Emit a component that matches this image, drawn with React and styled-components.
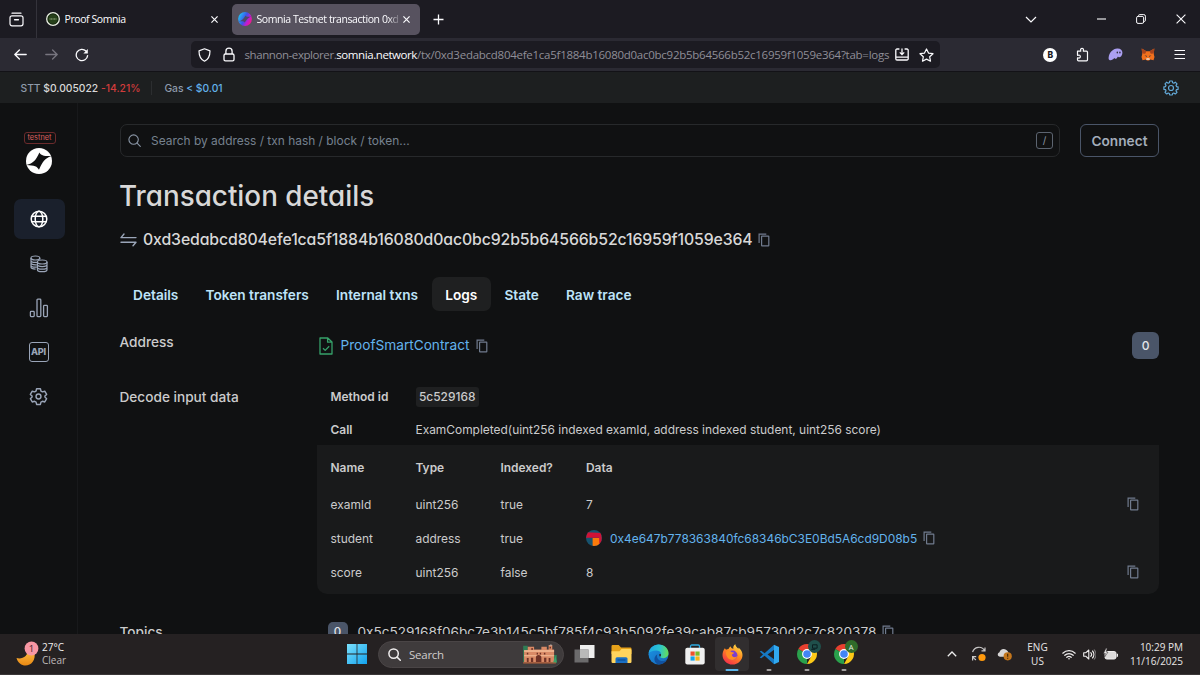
import React from "react";
import styled, { createGlobalStyle, css } from "styled-components";

const tabs = ["Details", "Token transfers", "Internal txns", "Logs", "State", "Raw trace"];

const params = [
  { name: "examId", type: "uint256", indexed: "true", value: "7" },
  {
    name: "student",
    type: "address",
    indexed: "true",
    address: "0x4e647b778363840fc68346bC3E0Bd5A6cd9D08b5",
  },
  { name: "score", type: "uint256", indexed: "false", value: "8" },
];

const App = () => {
  return (
    <Screen>
      <GlobalStyle />
      <TabStrip>
        <PinnedCell>
          <RecentIcon />
        </PinnedCell>
        <BrowserTab $width={185}>
          <ProofFavicon />
          <TabTitle>Proof Somnia</TabTitle>
          <CloseIcon size={7} />
        </BrowserTab>
        <BrowserTab $width={188} $active>
          <SomniaFavicon />
          <TabTitle $fade>Somnia Testnet transaction 0xd3</TabTitle>
          <CloseIcon size={7} />
        </BrowserTab>
        <NewTab>
          <svg width="11" height="11" viewBox="0 0 11 11" stroke="#fbfbfe" strokeWidth="1.3">
            <path d="M5.5 0.5v10M0.5 5.5h10" />
          </svg>
        </NewTab>
        <WindowButtons>
          <WindowButton $width={70}>
            <svg width="12" height="7" viewBox="0 0 12 7" fill="none" stroke="#fbfbfe" strokeWidth="1.2">
              <path d="M1 1l5 5 5-5" />
            </svg>
          </WindowButton>
          <WindowButton $width={70}>
            <svg width="9" height="2" viewBox="0 0 9 2">
              <path d="M0 1h9" stroke="#fbfbfe" strokeWidth="1.1" />
            </svg>
          </WindowButton>
          <WindowButton $width={10}>
            <svg width="10" height="10" viewBox="0 0 10 10" fill="none" stroke="#fbfbfe">
              <rect x="0.6" y="2.4" width="7" height="7" rx="1.4" />
              <path d="M2.6 2V1.6a1 1 0 0 1 1-1h4.2a1.6 1.6 0 0 1 1.6 1.6v4.2a1 1 0 0 1-1 1H8" />
            </svg>
          </WindowButton>
          <WindowButton $width={69}>
            <CloseIcon size={10} thin />
          </WindowButton>
        </WindowButtons>
      </TabStrip>

      <Toolbar>
        <NavButtons>
          <ArrowIcon />
          <ArrowIcon forward />
          <ReloadIcon />
        </NavButtons>
        <UrlBar>
          <ShieldIcon />
          <LockIcon />
          <Url>
            <UrlHost>
              shannon-explorer.<b>somnia.network</b>
            </UrlHost>
            /tx/0xd3edabcd804efe1ca5f1884b16080d0ac0bc92b5b64566b52c16959f1059e364?tab=logs
          </Url>
          <SaveIcon />
          <StarIcon />
        </UrlBar>
        <Extensions>
          <BIcon>B</BIcon>
          <PuzzleIcon />
          <PhantomIcon />
          <FoxIcon />
          <svg width="12" height="11" viewBox="0 0 12 11" stroke="#fbfbfe" strokeWidth="1.2">
            <path d="M0.5 1.5h10.5M0.5 5.5h10.5M0.5 9.5h10.5" />
          </svg>
        </Extensions>
      </Toolbar>

      <InfoBar>
        <Stat>
          STT <em>$0.005022</em> <Drop>-14.21%</Drop>
        </Stat>
        <StatDivider />
        <Stat>
          Gas <Price>&lt; $0.01</Price>
        </Stat>
        <CogIcon />
      </InfoBar>

      <Page>
        <Sidebar>
          <TestnetTag>testnet</TestnetTag>
          <SomniaLogo />
          <SideNav>
            <SideItem $active>
              <GlobeIcon />
            </SideItem>
            <SideItem>
              <CoinsIcon />
            </SideItem>
            <SideItem>
              <BarsIcon />
            </SideItem>
            <SideItem>
              <ApiBox>API</ApiBox>
            </SideItem>
            <SideItem>
              <GearIcon />
            </SideItem>
          </SideNav>
        </Sidebar>

        <Main>
          <TopRow>
            <SearchBox>
              <SearchIcon size={13} color="#8a96a6" />
              <SearchHint>Search by address / txn hash / block / token...</SearchHint>
              <SlashKey>/</SlashKey>
            </SearchBox>
            <Connect>Connect</Connect>
          </TopRow>

          <Title>Transaction details</Title>
          <HashRow>
            <SwapIcon />
            <TxHash>0xd3edabcd804efe1ca5f1884b16080d0ac0bc92b5b64566b52c16959f1059e364</TxHash>
            <CopyIcon />
          </HashRow>

          <Tabs>
            {tabs.map((tab) => (
              <Tab key={tab} $active={tab === "Logs"}>
                {tab}
              </Tab>
            ))}
          </Tabs>

          <AddressRow>
            <Label $height={21} $width={199}>
              Address
            </Label>
            <ContractIcon />
            <ContractName>ProofSmartContract</ContractName>
            <CopyIcon />
            <LogIndex>0</LogIndex>
          </AddressRow>

          <DecodeRow>
            <Label $height={20}>Decode input data</Label>
            <Decoded>
              <MethodRow>
                <b>Method id</b>
                <MethodId>5c529168</MethodId>
              </MethodRow>
              <MethodRow>
                <b>Call</b>
                <Signature>
                  ExamCompleted(uint256 indexed examId, address indexed student, uint256 score)
                </Signature>
              </MethodRow>
              <ParamTable>
                <ParamRow $head>
                  <span>Name</span>
                  <span>Type</span>
                  <span>Indexed?</span>
                  <span>Data</span>
                </ParamRow>
                {params.map((p) => (
                  <ParamRow key={p.name}>
                    <span>{p.name}</span>
                    <span>{p.type}</span>
                    <span>{p.indexed}</span>
                    {p.address ? (
                      <AddressCell>
                        <Identicon />
                        <AddressLink>{p.address}</AddressLink>
                        <CopyIcon />
                      </AddressCell>
                    ) : (
                      <ValueCell>
                        {p.value}
                        <CopyIcon />
                      </ValueCell>
                    )}
                  </ParamRow>
                ))}
              </ParamTable>
            </Decoded>
          </DecodeRow>

          <TopicRow>
            <Label $height={20}>Topics</Label>
            <TopicIndex>0</TopicIndex>
            <TopicHash>0x5c529168f06bc7e3b145c5bf785f4c93b5092fe39cab87cb95730d2c7c820378</TopicHash>
            <CopyIcon />
          </TopicRow>
        </Main>
      </Page>

      <Taskbar>
        <Weather>
          <MoonIcon />
          <WeatherText>
            <b>27°C</b>
            <span>Clear</span>
          </WeatherText>
        </Weather>
        <WindowsIcon />
        <TaskSearch>
          <SearchIcon size={13} color="#f0eeee" bold />
          <span>Search</span>
          <PalaceArt />
        </TaskSearch>
        <Apps>
          <AppSlot>
            <TaskViewIcon />
          </AppSlot>
          <AppSlot>
            <FolderIcon />
          </AppSlot>
          <AppSlot>
            <EdgeIcon />
          </AppSlot>
          <AppSlot>
            <StoreIcon />
          </AppSlot>
          <AppSlot $focused>
            <FirefoxIcon />
            <Running $focused />
          </AppSlot>
          <AppSlot>
            <CodeIcon />
            <Running />
          </AppSlot>
          <AppSlot>
            <ChromeIcon />
            <ProfileDot $color="#1f4f4b">
              <svg width="7" height="6" viewBox="0 0 7 6" fill="none" stroke="#0b1d20">
                <path d="M1.5 0.8h4.6v3.4H1.5zM0.3 5.3h4" />
              </svg>
            </ProfileDot>
            <Running />
          </AppSlot>
          <AppSlot>
            <ChromeIcon />
            <ProfileDot $color="#2f6b2a">A</ProfileDot>
            <Running />
          </AppSlot>
        </Apps>
        <Tray>
          <TrayCell $width={28}>
            <svg width="10" height="6" viewBox="0 0 10 6" fill="none" stroke="#eee" strokeWidth="1.3">
              <path d="M0.8 5.2L5 1l4.2 4.2" />
            </svg>
          </TrayCell>
          <TrayCell $width={26}>
            <SyncIcon />
          </TrayCell>
          <TrayCell $width={26}>
            <CloudIcon />
          </TrayCell>
          <Language>
            <span>ENG</span>
            <span>US</span>
          </Language>
          <TrayCell $width={23}>
            <WifiIcon />
          </TrayCell>
          <TrayCell $width={17}>
            <VolumeIcon />
          </TrayCell>
          <TrayCell $width={25}>
            <BatteryIcon />
          </TrayCell>
          <Clock>
            <span>10:29 PM</span>
            <span>11/16/2025</span>
          </Clock>
        </Tray>
      </Taskbar>
    </Screen>
  );
};

/* ---------- icons ---------- */

const RecentIcon = () => (
  <svg width="15" height="15" viewBox="0 0 15 15" fill="none" stroke="#fbfbfe" strokeWidth="1.2" strokeLinecap="round">
    <path d="M3 1.2h9" />
    <rect x="1" y="3.8" width="13" height="10" rx="2" />
    <path d="M5.6 7.8h3.8" strokeWidth="1.4" />
  </svg>
);

const CloseIcon = ({ size, thin }) => (
  <svg width={size} height={size} viewBox="0 0 10 10" stroke="#fbfbfe" strokeWidth={thin ? 1.1 : 1.7}>
    <path d="M0.6 0.6l8.8 8.8M9.4 0.6L0.6 9.4" />
  </svg>
);

const ProofFavicon = () => (
  <svg width="14" height="14" viewBox="0 0 14 14">
    <circle cx="7" cy="7" r="6.3" fill="#10200a" stroke="#e9efe2" strokeWidth="1.3" />
    <circle cx="7" cy="7" r="4.8" fill="#26401a" />
    <path d="M3.6 7h6.8" stroke="#a9bd90" strokeWidth="1.2" strokeDasharray="1 0.5" />
  </svg>
);

const SomniaFavicon = () => (
  <svg width="14" height="14" viewBox="0 0 14 14">
    <defs>
      <linearGradient id="som" x1="0" y1="0.3" x2="1" y2="0.8">
        <stop offset="0" stopColor="#22c3f5" />
        <stop offset="0.45" stopColor="#3b53e8" />
        <stop offset="0.7" stopColor="#c21bd0" />
        <stop offset="1" stopColor="#ff1a75" />
      </linearGradient>
    </defs>
    <circle cx="7" cy="7" r="6.9" fill="url(#som)" />
    <path d="M0.6 9.4C4 8.4 5.4 7 7.6 3.4 8 4.8 9.6 5 13.4 4.6 10 6 8.800 7.400 6.700 10.600 6 9.200 4.400 9 0.600 9.400z" fill="#4c4a68" />
  </svg>
);

const ArrowIcon = ({ forward }) => (
  <svg width="13" height="11" viewBox="0 0 13 11" fill="none" stroke={forward ? "#77757f" : "#fbfbfe"} strokeWidth="1.3" strokeLinecap="round" strokeLinejoin="round">
    {forward ? <path d="M0.8 5.5h11.4M7.6 1l4.6 4.5L7.6 10" /> : <path d="M12.2 5.5H0.8M5.4 1L0.8 5.5 5.4 10" />}
  </svg>
);

const ReloadIcon = () => (
  <svg width="14" height="14" viewBox="0 0 14 14" fill="none" stroke="#fbfbfe" strokeWidth="1.3" strokeLinecap="round">
    <path d="M12.6 7.6A5.7 5.7 0 1 1 11 3" />
    <path d="M12.8 1v4.4H8.4z" fill="#fbfbfe" stroke="none" />
  </svg>
);

const ShieldIcon = () => (
  <svg width="13" height="14" viewBox="0 0 13 14" fill="none" stroke="#fbfbfe" strokeWidth="1.2" strokeLinejoin="round">
    <path d="M6.5 0.8L12 2.9c0 4.8-1.2 8.2-5.5 10.3C2.2 11.1 1 7.7 1 2.9z" />
  </svg>
);

const LockIcon = () => (
  <svg width="12" height="15" viewBox="0 0 12 15" fill="none" stroke="#fbfbfe" strokeWidth="1.3">
    <rect x="1" y="7" width="10" height="6.8" rx="1.4" />
    <path d="M2.9 7V4.2a3.1 3.1 0 0 1 6.2 0V7" />
  </svg>
);

const SaveIcon = () => (
  <svg width="14" height="13" viewBox="0 0 14 13" fill="none" stroke="#fbfbfe" strokeWidth="1.3">
    <path d="M4.4 1H2a1.2 1.2 0 0 0-1.2 1.2v8.6A1.2 1.2 0 0 0 2 12h10a1.2 1.2 0 0 0 1.2-1.2V2.2A1.2 1.2 0 0 0 12 1H9.6M0.8 9.2h12.4M7 0.4v6M4.8 4.4L7 6.6l2.2-2.2" />
  </svg>
);

const StarIcon = () => (
  <svg width="15" height="14" viewBox="0 0 15 14" fill="none" stroke="#fbfbfe" strokeWidth="1.2" strokeLinejoin="round">
    <path d="M7.5 1l2 4.1 4.5 0.6-3.3 3.1 0.8 4.4-4-2.1-4 2.1 0.8-4.4L1 5.7l4.5-0.6z" />
  </svg>
);

const PuzzleIcon = () => (
  <svg width="13" height="15" viewBox="0 0 13 15" fill="none" stroke="#fbfbfe" strokeWidth="1.2" strokeLinejoin="round">
    <path d="M1.5 7V4.2h2.9c0.5 0 0.5-0.3 0.3-0.8-0.9-2.7 3.6-2.7 2.7 0-0.2 0.5-0.2 0.8 0.3 0.8H10.5a1 1 0 0 1 1 1v7.6a1 1 0 0 1-1 1H2.5a1 1 0 0 1-1-1V11.2c0-0.5 0.3-0.5 0.8-0.3 2.7 0.9 2.7-3.6 0-2.7-0.5 0.2-0.8 0.2-0.8-0.3z" />
  </svg>
);

const PhantomIcon = () => (
  <svg width="15" height="13" viewBox="0 0 15 13">
    <path d="M0.6 9.8C1.2 4.5 4.8 0.9 9.2 0.6 12.6 0.4 14.6 2.4 14.4 5 14.2 8 12.4 9.5 10.8 9.3 10 9.2 10 8.7 9.6 8.9 8.9 10.4 7.6 11.3 6.8 10.6 6.5 10.3 6.5 10 6.2 10.1 4.6 12.7 0.3 13.2 0.6 9.8z" fill="#ab9ff2" />
    <ellipse cx="9.3" cy="4.4" rx="0.7" ry="1" fill="#2b2a33" />
    <ellipse cx="11.9" cy="4.4" rx="0.7" ry="1" fill="#2b2a33" />
  </svg>
);

const FoxIcon = () => (
  <svg width="14" height="13" viewBox="0 0 14 13">
    <path d="M0.7 0.5L5.4 3.3h3.2L13.3 0.5l-0.5 5.7 0.7 2.7-1 3.4-3.2-0.9-1.3 1H6l-1.3-1-3.2 0.9-1-3.4 0.7-2.7z" fill="#f2701d" />
    <path d="M0.7 0.5L5.4 3.3 4.2 5.8 1.2 5.6zM13.3 0.5L8.6 3.3l1.2 2.5 3-0.2z" fill="#a8431c" />
    <path d="M3.6 7.4l2 0.3 0.3 1.4zM10.4 7.4l-2 0.3-0.3 1.4z" fill="#243040" />
    <path d="M5.5 10.3h3l0.3 1.5H5.2z" fill="#e8ded6" />
  </svg>
);

const CogIcon = () => (
  <svg width="16" height="16" viewBox="0 0 16 16" fill="none" stroke="#63a9d8" strokeWidth="1.2" strokeLinejoin="round">
    <path d="M6.7 1h2.6l0.3 1.7 1.2 0.5 1.5-1 1.7 1.7-1 1.5 0.5 1.2 1.6 0.3v2.4l-1.6 0.3-0.5 1.2 1 1.5-1.7 1.7-1.5-1-1.2 0.5L9.3 15H6.7l-0.3-1.5-1.2-0.5-1.5 1L2 12.3l1-1.5-0.5-1.2L0.9 9.3V6.9l1.6-0.3L3 5.4l-1-1.5 1.7-1.7 1.5 1 1.2-0.5z" />
    <circle cx="8" cy="8" r="2.5" />
  </svg>
);

const SomniaLogo = () => (
  <svg width="26" height="26" viewBox="0 0 26 26">
    <circle cx="13" cy="13" r="13" fill="#fff" />
    <path d="M0.3 17C7.5 15 9.8 12.200 13.4 4.4 15 7.2 17.600 8.200 25.400 8 18.200 10.800 16.500 13.800 13 21.800 11.200 18.400 8.600 17.300 0.300 17z" fill="#101112" />
  </svg>
);

const GlobeIcon = () => (
  <svg width="18" height="18" viewBox="0 0 18 18" fill="none" stroke="#fff" strokeWidth="1.5">
    <circle cx="9" cy="9" r="7.8" />
    <ellipse cx="9" cy="9" rx="3.8" ry="7.8" />
    <path d="M1.7 6.3h14.6M1.7 11.7h14.6" />
  </svg>
);

const CoinsIcon = () => (
  <svg width="18" height="18" viewBox="0 0 18 18" fill="none" stroke="#9aa5b8" strokeWidth="1.2">
    <ellipse cx="5.4" cy="3" rx="4.4" ry="2" />
    <path d="M1 3v9.3c0 0.9 1.8 1.7 4.600 1.800M9.800 3v1.800M1 5.400c0 1.100 2 2 4.400 2 0.600 0 1.100 0 1.600-0.100M1 7.800c0 1.100 2 2 4.400 2h1.400M1 10.200c0 1.100 2 2 4.400 2h1.400" />
    <ellipse cx="12.2" cy="7" rx="4.8" ry="2" />
    <path d="M7.4 7v7.7c0 1.1 2.1 2 4.8 2s4.8-0.900 4.800-2V7M7.400 9.600c0 1.100 2.100 2 4.800 2s4.800-0.900 4.800-2M7.400 12.200c0 1.100 2.100 2 4.800 2s4.800-0.900 4.800-2" />
  </svg>
);

const BarsIcon = () => (
  <svg width="20" height="20" viewBox="0 0 20 20" fill="none" stroke="#9aa5b8" strokeWidth="1.3">
    <rect x="1.4" y="13.4" width="3.8" height="5.2" rx="0.8" />
    <rect x="8" y="1.2" width="3.8" height="17.4" rx="0.8" />
    <rect x="14.6" y="7.4" width="3.8" height="11.2" rx="0.8" />
  </svg>
);

const GearIcon = () => (
  <svg width="19" height="19" viewBox="0 0 24 24" fill="none" stroke="#9aa5b8" strokeWidth="1.8" strokeLinejoin="round">
    <path d="M9.6 2.2h4.8l0.7 2.9 1.9 1.1 2.9-0.9 2.4 4.1-2.2 2.1v1.2l2.2 2.1-2.4 4.1-2.9-0.9-1.9 1.1-0.7 2.9H9.6l-0.7-2.9L7 18l-2.9 0.9-2.4-4.1 2.2-2.1v-1.2L1.7 9.4l2.4-4.1L7 6.2l1.9-1.1z" />
    <circle cx="12" cy="12" r="3.1" />
  </svg>
);

const SearchIcon = ({ size, color, bold }) => (
  <svg width={size} height={size} viewBox="0 0 13 13" fill="none" stroke={color} strokeWidth={bold ? 1.5 : 1.1} strokeLinecap="round">
    <circle cx="5.6" cy="5.6" r="4.7" />
    <path d="M9.1 9.1l3.2 3.2" />
  </svg>
);

const SwapIcon = () => (
  <svg width="17" height="14" viewBox="0 0 17 14" fill="none" stroke="#9aa5b8" strokeWidth="1.4" strokeLinecap="round" strokeLinejoin="round">
    <path d="M4 1L1 4.6h15M1 9.2h15l-3 3.6" />
  </svg>
);

const CopyIcon = () => (
  <svg width="12" height="14" viewBox="0 0 12 14" fill="none" stroke="#707b8e" strokeWidth="1.2">
    <path d="M1.1 10V1.1h7.2" />
    <rect x="3.6" y="3.2" width="7.2" height="9.6" rx="0.4" />
  </svg>
);

const ContractIcon = () => (
  <svg width="14" height="18" viewBox="0 0 14 18" fill="none" stroke="#36a16a" strokeWidth="1.3" strokeLinejoin="round">
    <path d="M1 1h7.8L13 5v12H1zM8.6 1v4.2H13" />
    <path d="M4 11.2l2.2 2.2 4-4.2" />
  </svg>
);

const Identicon = () => (
  <svg width="16" height="16" viewBox="0 0 16 16">
    <clipPath id="idc">
      <circle cx="8" cy="8" r="8" />
    </clipPath>
    <g clipPath="url(#idc)">
      <path d="M0 0h16v16H0z" fill="#17536f" />
      <path d="M1 2.2L15.4 3 16 14l-3 1V7.8H0z" fill="#d01236" />
      <path d="M6.6 8h6.5l0.3 8H6.6z" fill="#fb7a0a" />
    </g>
  </svg>
);

const MoonIcon = () => (
  <svg width="23" height="26" viewBox="0 0 23 26">
    <defs>
      <linearGradient id="moon" x1="0" y1="0" x2="0" y2="1">
        <stop offset="0" stopColor="#ffc24b" />
        <stop offset="1" stopColor="#e88812" />
      </linearGradient>
    </defs>
    <path d="M0.5 17C6.5 18.6 12 15 12.6 8l5.6 2.5C20.5 19 15 24.6 9.5 24.6 5.5 24.6 1.8 21.6 0.5 17z" fill="url(#moon)" />
    <circle cx="15.5" cy="7.5" r="6.9" fill="#f897a4" />
    <text x="15.5" y="11" textAnchor="middle" fontSize="9.5" fill="#3b2228" fontFamily="Open Sans, sans-serif">
      1
    </text>
  </svg>
);

const WindowsIcon = () => (
  <svg width="20" height="20" viewBox="0 0 20 20">
    <defs>
      <linearGradient id="win" x1="0" y1="0" x2="1" y2="1">
        <stop offset="0" stopColor="#7be0fb" />
        <stop offset="1" stopColor="#12a2ee" />
      </linearGradient>
    </defs>
    <path d="M0 0h9.6v9.6H0zM10.4 0H20v9.6h-9.6zM0 10.4h9.6V20H0zM10.4 10.4H20V20h-9.6z" fill="url(#win)" />
  </svg>
);

const PalaceArt = () => (
  <svg width="36" height="20" viewBox="0 0 37 22">
    <path d="M0 2h5v18H0zM31 12h6v9h-6z" fill="#2f7d55" />
    <path d="M1 7h4V3h7v3h8V3h6v3h2V1h4v5h2v14H1z" fill="#d98a66" />
    <path d="M1 7h33v1.4H1zM1 12.500h33v0.900H1z" fill="#f3bd98" />
    <path d="M4 20v-4.500h2v4.500zM8.500 20v-5h2.500v5zM14 20v-5a3 3 0 0 1 6 0v5zM23 20v-5h2.500v5zM28 20v-4.500h2v4.500zM4 11.500V9.500h1.600v2zM9 6.500V4.500h1.600v2zM14.800 11.500V9.500h1.500v2zM18.200 11.500V9.500h1.500v2zM22.800 11.500V9.500h1.600v2zM29 5V3h1.600v2z" fill="#6e3226" />
    <path d="M0 20h36v1.500H0z" fill="#b9653f" />
    <path d="M29 2l1.500-2L32 2z" fill="#b7a6a0" />
    <path d="M33 20l2.500-7 1.500 7z" fill="#3da06a" />
  </svg>
);

const TaskViewIcon = () => (
  <svg width="21" height="20" viewBox="0 0 21 20">
    <path d="M6 1h14.5v13H6z" fill="#eeeeee" />
    <path d="M0.5 5.5h14v13h-14z" fill="#6c6b6c" />
    <path d="M6 5.500h8.500V14H6z" fill="#b9b9b9" />
  </svg>
);

const FolderIcon = () => (
  <svg width="21" height="20" viewBox="0 0 21 20">
    <path d="M0.5 2.2A1.2 1.2 0 0 1 1.7 1h6l2.3 2.5h9.3A1.2 1.2 0 0 1 20.5 4.7V10H0.5z" fill="#e7a21a" />
    <path d="M0.5 7.2h8L10.5 5h8.800a1.200 1.200 0 0 1 1.200 1.200v11.600a1.200 1.200 0 0 1-1.200 1.200H1.700a1.200 1.200 0 0 1-1.200-1.200z" fill="#ffd45e" />
    <path d="M4.500 19v-4.200a1.500 1.500 0 0 1 1.500-1.500h9a1.500 1.500 0 0 1 1.500 1.500V19z" fill="#1a6fc4" />
    <path d="M6.500 16h8" stroke="#0d4f97" strokeWidth="1.2" />
  </svg>
);

const EdgeIcon = () => (
  <svg width="21" height="21" viewBox="0 0 21 21">
    <defs>
      <linearGradient id="edgeTop" x1="0" y1="0.4" x2="1" y2="0.5">
        <stop offset="0" stopColor="#1fa7e6" />
        <stop offset="0.55" stopColor="#2cc6cf" />
        <stop offset="1" stopColor="#66dd55" />
      </linearGradient>
      <linearGradient id="edgeLow" x1="0" y1="0" x2="1" y2="1">
        <stop offset="0" stopColor="#1b96e6" />
        <stop offset="1" stopColor="#1565b8" />
      </linearGradient>
    </defs>
    <circle cx="10.5" cy="10.5" r="10" fill="url(#edgeLow)" />
    <path d="M0.6 9.5C1.3 4.2 5.5 0.5 10.7 0.5c6 0 9.8 4.300 9.800 8.600 0 3.200-2.300 5.100-5.100 5.100-2.300 0-3.200-0.900-3.200-1.500 0-0.500 0.900-0.900 0.900-2.300C13.100 8 11 6.600 8.100 6.600 4.400 6.600 1.700 8 0.600 9.500z" fill="url(#edgeTop)" />
    <path d="M9.400 10.200c-1.500 3.600 1.600 7 5.300 6.900 1.800 0 3.300-0.600 4-1-1.600 2.800-4.400 4.300-7.600 4.400C6 20 4.600 13 9.400 10.200z" fill="#1051a0" />
    <path d="M12.200 12.700c-0.900-0.600-1-1.600-0.900-2.500 0.800-0.600 1.700-0.200 1.800 0.500 0 0.900-0.800 1.500-0.900 2z" fill="#262223" />
  </svg>
);

const StoreIcon = () => (
  <svg width="20" height="21" viewBox="0 0 20 21">
    <path d="M5.5 4.5V2.3A1.3 1.3 0 0 1 6.8 1h6.4a1.3 1.3 0 0 1 1.3 1.3v2.2" fill="none" stroke="#2da9e0" strokeWidth="1.3" />
    <rect x="0.3" y="3.8" width="19.4" height="16.7" rx="2" fill="#f0f0f0" />
    <path d="M5.5 7.5h4.2v4.2H5.5z" fill="#f0512b" />
    <path d="M10.4 7.5h4.2v4.2h-4.2z" fill="#7db928" />
    <path d="M5.5 12.4h4.2v4.2H5.5z" fill="#18a3e8" />
    <path d="M10.4 12.4h4.2v4.2h-4.2z" fill="#f8b517" />
  </svg>
);

const FirefoxIcon = () => (
  <svg width="21" height="21" viewBox="0 0 21 21">
    <defs>
      <linearGradient id="ffBody" x1="0.8" y1="0" x2="0.2" y2="1">
        <stop offset="0" stopColor="#ffe24a" />
        <stop offset="0.45" stopColor="#ff8a1f" />
        <stop offset="1" stopColor="#f3274f" />
      </linearGradient>
    </defs>
    <path d="M2.8 4.2c0.5 0.4 0.9 0.9 1.2 1.5 0.8-0.5 1.7-0.7 2.6-0.7C7 3.5 7.8 2.8 8.8 2.4c0 1.2 1 2 2.6 2.3C10.9 3 11.7 1.2 13.4 0.3c0.1 2.2 1.6 3.2 2.9 4.5 0.3-0.3 0.3-0.9 0.2-1.4 2.7 2 4 4.8 4 7.6 0 5.3-4.5 9.6-10 9.6S0.500 16.300 0.500 11c0-2.600 0.900-4.900 2.300-6.800z" fill="url(#ffBody)" />
    <circle cx="10.7" cy="11.3" r="4.7" fill="#7a3fd0" />
    <path d="M4.2 7.6c2.2-0.8 4.4-0.6 5.7 0.6 0.8 0.2 2 0.1 2.3 0.6-0.3 1-1.7 1.2-2.3 1.8-0.3 2.4 2.6 3.5 5.3 1.6-1 3.2-4.2 4.5-7 3.4C5.2 14.4 3.5 11 4.2 7.600z" fill="#ff8e22" />
  </svg>
);

const CodeIcon = () => (
  <svg width="21" height="21" viewBox="0 0 21 21">
    <path d="M15 0.7L5.6 9.3 2.2 6.7 0.7 7.5 4 10.5 0.7 13.5l1.5 0.8 3.4-2.6 9.4 8.6 0.5-4.8-7-5 7-5z" fill="#1679c4" />
    <path d="M15 0.7l5 2.3v15l-5 2.3z" fill="#31a9f0" />
  </svg>
);

const ChromeIcon = () => (
  <svg width="20" height="20" viewBox="0 0 20 20">
    <path d="M10 10L1.34 5A10 10 0 0 1 18.66 5z" fill="#e8402f" />
    <path d="M10 10L10 20A10 10 0 0 1 1.34 5z" fill="#2aa14c" />
    <path d="M10 5.2h8.760A10 10 0 0 1 10 20l4.200-7.600z" fill="#fcc917" />
    <circle cx="10" cy="10" r="4.9" fill="#fff" />
    <circle cx="10" cy="10" r="3.8" fill="#4285f4" />
  </svg>
);

const SyncIcon = () => (
  <svg width="16" height="16" viewBox="0 0 16 16" fill="none" stroke="#c9c7c7" strokeWidth="1.2">
    <path d="M1.6 6.2A6.5 6.5 0 0 1 13.6 4.6M14 1.4v3.5h-3.5M5 13.9A6.5 6.5 0 0 1 2 11M1.6 14.4v-3.8h3.6" />
    <circle cx="11" cy="11.5" r="3.6" fill="#ff9a0d" stroke="none" />
  </svg>
);

const CloudIcon = () => (
  <svg width="15" height="14" viewBox="0 0 15 14">
    <path d="M3.2 9.8C0.2 9.5 0 6 2.5 5.3 3 2.5 6.5 0.8 9.4 3c1.3 1 2 2 2.2 3.5L8 9.8z" fill="#d8d6d6" />
    <circle cx="10.7" cy="9.3" r="4.1" fill="#c4761c" />
    <path d="M10.7 6.8v3M10.7 10.7v1" stroke="#3b2406" strokeWidth="1.1" />
  </svg>
);

const WifiIcon = () => (
  <svg width="14" height="11" viewBox="0 0 14 11" fill="none" stroke="#f0eeee" strokeWidth="1.2" strokeLinecap="round">
    <path d="M0.8 4.2a8.8 8.8 0 0 1 12.4 0M2.8 6.3a6 6 0 0 1 8.4 0M4.8 8.3a3.2 3.2 0 0 1 4.4 0" />
    <circle cx="7" cy="9.7" r="0.8" fill="#f0eeee" stroke="none" />
  </svg>
);

const VolumeIcon = () => (
  <svg width="13" height="11" viewBox="0 0 13 11" fill="none" stroke="#f0eeee" strokeWidth="1.1" strokeLinejoin="round" strokeLinecap="round">
    <path d="M0.7 3.8h2L5.8 1v9L2.7 7.2h-2z" />
    <path d="M7.8 3.6a2.8 2.8 0 0 1 0 3.8M9.5 2a5 5 0 0 1 0 7" />
    <path d="M11.2 0.8a7 7 0 0 1 0 9.4" stroke="#747172" />
  </svg>
);

const BatteryIcon = () => (
  <svg width="15" height="12" viewBox="0 0 15 12">
    <rect x="2" y="3.5" width="11" height="7.5" rx="1.8" fill="#dddbdb" stroke="#f0eeee" />
    <path d="M14.4 5.8v3" stroke="#f0eeee" strokeWidth="1.2" />
    <path d="M3 0.2L0.4 5.4h2L1.6 9 5 4h-2l1.2-3.8z" fill="#f0eeee" stroke="#242122" strokeWidth="0.5" />
  </svg>
);

/* ---------- styles ---------- */

const GlobalStyle = createGlobalStyle`
  * {
    box-sizing: border-box;
  }
  body {
    margin: 0;
    background: #101112;
  }
  svg {
    display: block;
    flex-shrink: 0;
  }
`;

const segoe = css`
  font-family: "Open Sans", "Noto Sans", sans-serif;
`;

/* Inter with the single-storey a, for headings and hashes */
const heading = css`
  font-family: Inter, sans-serif;
  font-feature-settings: "cv11";
  font-weight: 500;
  color: #d8d8d8;
  white-space: nowrap;
`;

const Screen = styled.div`
  width: 1200px;
  height: 675px;
  display: flex;
  flex-direction: column;
  overflow: hidden;
  font-family: Inter, sans-serif;
  background: #101112;
`;

const TabStrip = styled.header`
  height: 38px;
  flex-shrink: 0;
  display: flex;
  align-items: center;
  background: #1c1b22;
  ${segoe}
`;

const PinnedCell = styled.div`
  width: 37px;
  height: 38px;
  display: flex;
  align-items: center;
  padding-left: 9px;
  border-right: 1px solid #34333b;
`;

const BrowserTab = styled.div`
  width: ${(props) => props.$width}px;
  height: 31px;
  margin-right: ${(props) => (props.$active ? 0 : 10)}px;
  padding: 0 ${(props) => (props.$active ? 10 : 4)}px 0 ${(props) => (props.$active ? 6 : 9)}px;
  display: flex;
  align-items: center;
  gap: 4.5px;
  border-radius: 5px;
  background: ${(props) => (props.$active ? "#57525f" : "transparent")};
`;

const TabTitle = styled.span`
  flex: 1;
  min-width: 0;
  overflow: hidden;
  white-space: nowrap;
  font-size: 10.5px;
  letter-spacing: -0.42px;
  line-height: 16px;
  color: #fbfbfe;
  ${(props) => props.$fade && "mask-image: linear-gradient(to right, #000 92%, transparent 102%);"}
`;

const NewTab = styled.div`
  width: 37px;
  display: flex;
  justify-content: center;
`;

const WindowButtons = styled.div`
  margin-left: auto;
  margin-right: -15px;
  display: flex;
  align-items: center;
`;

const WindowButton = styled.div`
  width: ${(props) => props.$width}px;
  display: flex;
  justify-content: center;
`;

const Toolbar = styled.div`
  height: 34px;
  flex-shrink: 0;
  display: flex;
  align-items: center;
  background: #2b2a33;
  border-bottom: 1px solid #131217;
`;

const NavButtons = styled.div`
  width: 191px;
  display: flex;
  align-items: center;
  gap: 17.5px;
  padding-left: 14px;
`;

const UrlBar = styled.div`
  width: 749px;
  height: 27px;
  padding: 0 6px 0 7px;
  display: flex;
  align-items: center;
  gap: 10px;
  border-radius: 5px;
  background: #1c1b22;

  svg:nth-child(2) {
    margin-left: 1.5px;
  }
`;

const Url = styled.span`
  ${segoe}
  flex: 1;
  min-width: 0;
  white-space: nowrap;
  font-size: 11.5px;
  letter-spacing: -0.26px;
  line-height: 18px;
  color: #8f8e97;
`;

const UrlHost = styled.span`
  letter-spacing: -0.42px;

  b {
    font-weight: 400;
    color: #fbfbfe;
  }
`;

const Extensions = styled.div`
  flex: 1;
  padding: 0 14px 0 0;
  display: flex;
  align-items: center;
  justify-content: flex-end;
  gap: 18.7px;
`;

const BIcon = styled.div`
  width: 14px;
  height: 14px;
  border-radius: 50%;
  background: #fff;
  color: #1c1b22;
  font: 800 8.5px/14px Inter, sans-serif;
  text-align: center;
`;

const InfoBar = styled.div`
  height: 31px;
  flex-shrink: 0;
  display: flex;
  align-items: center;
  padding: 0 21px 0 20.5px;
  background: #1d1f20;

  svg {
    margin-left: auto;
  }
`;

const Stat = styled.div`
  font-size: 10.3px;
  line-height: 16px;
  font-weight: 500;
  color: #8f9bac;

  em {
    font-style: normal;
    color: #d8d8d8;
  }
`;

const Drop = styled.span`
  color: #d23c3c;
`;

const Price = styled.span`
  color: #63b3ed;
`;

const StatDivider = styled.div`
  width: 1px;
  height: 14px;
  margin: 0 12px 0 11px;
  background: #2c2e30;
`;

const Page = styled.div`
  flex: 1;
  min-height: 0;
  display: flex;
  overflow: hidden;
`;

const Sidebar = styled.nav`
  width: 78px;
  flex-shrink: 0;
  padding-top: 29px;
  display: flex;
  flex-direction: column;
  align-items: center;
  border-right: 1px solid #18191b;
`;

const TestnetTag = styled.div`
  height: 12px;
  width: 32px;
  margin: 0 0 4px 2px;
  border: 1px solid #6b2b2c;
  border-radius: 3px;
  font-size: 7.4px;
  line-height: 10px;
  text-align: center;
  color: #d86060;
`;

const SideNav = styled.div`
  margin: 25px 0 0 2px;
  display: flex;
  flex-direction: column;
  gap: 4px;
`;

const SideItem = styled.div`
  width: 51px;
  height: 40.4px;
  padding-right: 2px;
  display: flex;
  align-items: center;
  justify-content: center;
  border-radius: 7px;
  background: ${(props) => (props.$active ? "#1a202c" : "transparent")};
`;

const ApiBox = styled.div`
  width: 20px;
  height: 20px;
  border: 1.2px solid #9aa5b8;
  border-radius: 3px;
  font-size: 9.2px;
  font-weight: 800;
  letter-spacing: -0.3px;
  line-height: 18px;
  text-align: center;
  color: #9aa5b8;
`;

const Main = styled.main`
  flex: 1;
  min-width: 0;
  padding: 21px 41px 0 41.5px;
`;

const TopRow = styled.div`
  display: flex;
  gap: 20px;
`;

const SearchBox = styled.div`
  flex: 1;
  height: 33px;
  padding: 0 6px 0 7.5px;
  display: flex;
  align-items: center;
  border: 1px solid #27292b;
  border-radius: 7px;
`;

const SearchHint = styled.span`
  flex: 1;
  margin-left: 10px;
  font-size: 11.95px;
  line-height: 16px;
  color: #76818f;
`;

const SlashKey = styled.div`
  width: 17px;
  height: 17px;
  border: 1px solid #5c6470;
  border-radius: 3px;
  font-size: 10px;
  line-height: 15px;
  text-align: center;
  color: #8e98a6;
`;

const Connect = styled.div`
  width: 79px;
  height: 33px;
  border: 1.5px solid #4a5568;
  border-radius: 6px;
  font-size: 13.7px;
  font-weight: 600;
  line-height: 32px;
  text-align: center;
  color: #a3adbb;
`;

const Title = styled.h1`
  ${heading}
  margin: 21px 0 0 -0.5px;
  font-size: 27.8px;
  line-height: 36px;
`;

const HashRow = styled.div`
  height: 24px;
  margin-top: 14px;
  display: flex;
  align-items: center;
`;

const TxHash = styled.span`
  ${heading}
  margin: 0 5.5px 0 6.5px;
  font-size: 15.8px;
  letter-spacing: -0.11px;
  line-height: 24px;
`;

const Tabs = styled.div`
  margin-top: 25px;
  display: flex;
`;

const Tab = styled.div`
  height: 34px;
  padding: 0 13.6px;
  border-radius: 7px;
  font-size: 13.65px;
  font-weight: 600;
  line-height: 36px;
  white-space: nowrap;
  color: ${(props) => (props.$active ? "#ffffff" : "#bee3f8")};
  background: ${(props) => (props.$active ? "#1f2021" : "transparent")};
`;

const Label = styled.div`
  width: ${(props) => props.$width || 197.5}px;
  flex-shrink: 0;
  align-self: flex-start;
  font-size: 13.65px;
  font-weight: 500;
  line-height: ${(props) => props.$height}px;
  color: #cbcbcc;
`;

const AddressRow = styled.div`
  height: 27px;
  margin-top: 21px;
  display: flex;
  align-items: center;
`;

const ContractName = styled.span`
  margin: 0 6.5px 0 8px;
  font-size: 13.65px;
  line-height: 27px;
  color: #63b3ed;
`;

const LogIndex = styled.div`
  width: 27px;
  height: 27px;
  margin-left: auto;
  border-radius: 6px;
  background: #4a5568;
  font-size: 12px;
  font-weight: 500;
  line-height: 27px;
  text-align: center;
  color: #e2e5ea;
`;

const DecodeRow = styled.div`
  margin-top: 28px;
  display: flex;
`;

const Decoded = styled.div`
  flex: 1;
  font-size: 11.93px;
  color: #cbcbcc;
`;

const MethodRow = styled.div`
  height: 20px;
  margin-bottom: 13px;
  padding-left: 13.5px;
  display: grid;
  grid-template-columns: 85px 1fr;
  line-height: 19px;

  & + & {
    margin-bottom: 5px;
  }

  b {
    font-weight: 600;
  }
`;

const MethodId = styled.span`
  justify-self: start;
  height: 20px;
  padding: 0 3.5px;
  border-radius: 3px;
  background: #1f2021;
  font-weight: 500;
  line-height: 20px;
`;

const Signature = styled.span`
  white-space: nowrap;
`;

const ParamTable = styled.div`
  height: 149px;
  padding: 0 20px 0 13.5px;
  border-radius: 0 0 10px 10px;
  background: #191a1b;
`;

const ParamRow = styled.div`
  height: ${(props) => (props.$head ? 42 : 34)}px;
  padding-top: ${(props) => (props.$head ? 2 : 0)}px;
  display: grid;
  grid-template-columns: 85px 85px 85.5px 1fr;
  align-items: center;
  font-weight: ${(props) => (props.$head ? 600 : 400)};
`;

const AddressCell = styled.div`
  display: flex;
  align-items: center;
`;

const AddressLink = styled.span`
  margin: 0 5.5px 0 8px;
  color: #63b3ed;
`;

const ValueCell = styled.div`
  display: flex;
  align-items: center;
  justify-content: space-between;
`;

const TopicRow = styled.div`
  height: 20px;
  margin-top: 28px;
  display: flex;
  align-items: center;
`;

const TopicIndex = styled.div`
  width: 20px;
  height: 20px;
  margin: 0 10px 0 10.5px;
  border-radius: 5px;
  background: #4a5568;
  font-size: 11.5px;
  font-weight: 500;
  line-height: 20px;
  text-align: center;
  color: #e2e5ea;
`;

const TopicHash = styled.span`
  margin-right: 5.5px;
  font-size: 13.6px;
  color: #cbcbcc;
`;

const Taskbar = styled.footer`
  height: 41px;
  flex-shrink: 0;
  display: flex;
  align-items: center;
  background: #252122;
  border-bottom: 1px solid #3a3637;
  color: #e8e6e6;
  ${segoe}
`;

const Weather = styled.div`
  width: 347px;
  padding-left: 16px;
  display: flex;
  align-items: center;
  gap: 3px;
`;

const WeatherText = styled.div`
  display: flex;
  flex-direction: column;
  font-size: 10px;
  line-height: 13.5px;
  color: #bdbaba;

  b {
    font-weight: 500;
    color: #f0eeee;
  }
`;

const TaskSearch = styled.div`
  width: 186px;
  height: 27px;
  margin-left: 11px;
  padding: 0 5px 0 9px;
  display: flex;
  align-items: center;
  border: 1px solid #4a4546;
  border-radius: 14px;
  background: #3f3b3c;

  span {
    flex: 1;
    margin-left: 8px;
    font-size: 11.5px;
    letter-spacing: -0.25px;
    color: #cfcccc;
  }
`;

const Apps = styled.div`
  margin-left: 3px;
  display: flex;
  gap: 3.1px;
`;

const AppSlot = styled.div`
  position: relative;
  width: 34px;
  height: 34px;
  display: flex;
  align-items: center;
  justify-content: center;
  border-radius: 4px;
  background: ${(props) => (props.$focused ? "#312e2f" : "transparent")};
`;

const Running = styled.i`
  position: absolute;
  left: 50%;
  bottom: 0;
  width: ${(props) => (props.$focused ? 13 : 5)}px;
  height: 2px;
  border-radius: 1px;
  transform: translateX(-50%);
  background: ${(props) => (props.$focused ? "#5cb6ea" : "#a3a0a0")};
`;

const ProfileDot = styled.div`
  position: absolute;
  top: 3px;
  right: 3px;
  width: 13px;
  height: 13px;
  display: flex;
  align-items: center;
  justify-content: center;
  border-radius: 50%;
  background: ${(props) => props.$color};
  font-size: 7.5px;
  color: #e6efe4;
`;

const Tray = styled.div`
  margin-left: auto;
  padding-right: 17px;
  display: flex;
  align-items: center;
`;

const TrayCell = styled.div`
  width: ${(props) => props.$width}px;
  display: flex;
  justify-content: center;
`;

const Language = styled.div`
  width: 40px;
  display: flex;
  flex-direction: column;
  align-items: center;
  font-size: 10px;
  line-height: 14px;
`;

const Clock = styled.div`
  width: 60.5px;
  display: flex;
  flex-direction: column;
  align-items: flex-end;
  font-size: 10px;
  line-height: 14px;
  white-space: nowrap;
`;

export default App;
